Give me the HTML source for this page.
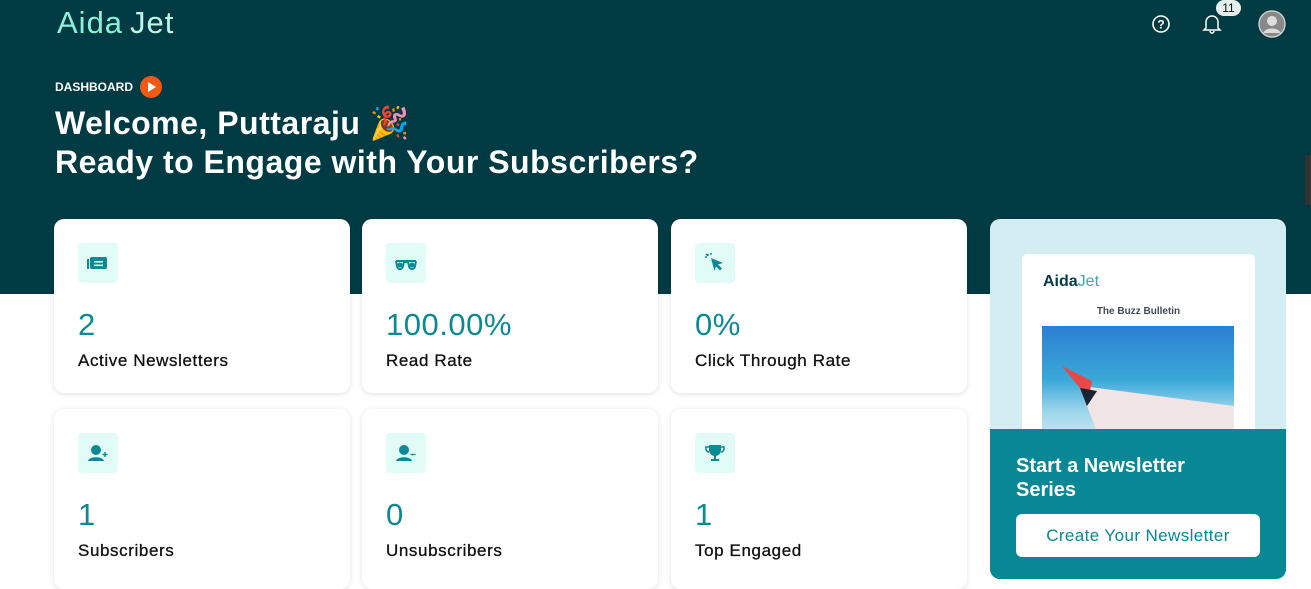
<!DOCTYPE html>
<html><head><meta charset="utf-8"><style>
*{margin:0;padding:0;box-sizing:border-box}
body{width:1311px;height:569px;overflow:hidden;background:#fff;font-family:"Liberation Sans",sans-serif;position:relative}
.hdr{position:absolute;left:0;top:0;width:1311px;height:294px;background:#003b44}
.logo{position:absolute;left:57px;top:5px;font-size:31px;color:#8ef0d6;letter-spacing:1px}
.logo span{font-weight:normal;color:#bdf5e6;margin-left:7px}
.dash{position:absolute;left:55px;top:80px;color:#fff;font-size:12px;font-weight:bold}
.play{position:absolute;left:140px;top:76px;width:22px;height:22px;border-radius:50%;background:#f05a14}
.play:after{content:"";position:absolute;left:8px;top:6px;border-left:8px solid #fff;border-top:5px solid transparent;border-bottom:5px solid transparent}
h1{position:absolute;left:55px;top:104px;color:#fff;font-size:32px;line-height:39px;font-weight:bold;letter-spacing:0.5px}
.card{position:absolute;background:#fff;border-radius:10px;box-shadow:0 1px 6px rgba(0,0,0,.12);width:296px}
.ib{position:absolute;left:24px;top:24px;width:40px;height:40px;border-radius:4px;background:#e1fcf6}
.ib svg{position:absolute;left:8px;top:8px}
.num{position:absolute;left:24px;top:88px;font-size:31px;color:#0b8a96;letter-spacing:0.5px}
.lbl{position:absolute;left:24px;top:132px;font-size:17px;color:#111;letter-spacing:0.6px;-webkit-text-stroke:0.3px #111}
.side{position:absolute;left:990px;top:219px;width:296px;height:360px;border-radius:10px;background:#d3eef3;overflow:hidden}
.paper{position:absolute;left:32px;top:35px;width:233px;height:200px;background:#fff;border-radius:5px}
.sky{position:absolute;left:20px;top:72px;width:192px;height:120px;background:linear-gradient(#2c7fd2,#3aa8d8 45%,#9ad4ea 70%,#d8eef6)}
.teal{position:absolute;left:0;top:210px;width:296px;height:150px;background:#078894}
.btn{position:absolute;left:26px;top:85px;width:244px;height:43px;background:#fff;border-radius:6px;color:#078894;font-size:17px;text-align:center;line-height:43px;letter-spacing:0.4px}
</style></head><body>
<div class="hdr"></div>
<div class="logo">Aida<span>Jet</span></div>
<svg style="position:absolute;left:1151px;top:14px" width="20" height="20" viewBox="0 0 20 20"><circle cx="10" cy="10" r="8" fill="none" stroke="#fff" stroke-width="1.6"/><text x="10" y="14.5" font-size="12" font-weight="bold" fill="#fff" text-anchor="middle" font-family="Liberation Sans">?</text></svg>
<svg style="position:absolute;left:1202px;top:12px" width="20" height="22" viewBox="0 0 20 22"><path d="M4 16V10a6 6 0 0 1 12 0v6l2 2H2z M8 19a2 2 0 0 0 4 0" fill="none" stroke="#fff" stroke-width="1.5"/></svg>
<div style="position:absolute;left:1216px;top:0;width:25px;height:16px;border-radius:8px;background:#e6eeee;color:#111;font-size:12px;text-align:center;line-height:16px">11</div>
<svg style="position:absolute;left:1258px;top:10px" width="28" height="28" viewBox="0 0 28 28"><circle cx="14" cy="14" r="13" fill="#888" stroke="#ccc" stroke-width="1.5"/><circle cx="14" cy="11" r="5" fill="#ddd"/><path d="M5 23a10 8 0 0 1 18 0z" fill="#ddd"/></svg>
<div style="position:absolute;left:1305px;top:155px;width:6px;height:50px;background:#333"></div>
<div class="dash">DASHBOARD</div><div class="play"></div>
<h1>Welcome, Puttaraju 🎉<br>Ready to Engage with Your Subscribers?</h1>

<div class="card" style="left:54px;top:219px;height:174px"><div class="ib"><svg width="24" height="24" viewBox="0 0 24 24"><rect x="4" y="6" width="17" height="12" rx="2" fill="#0b8a96"/><rect x="1" y="8" width="2" height="10" fill="#0b8a96"/><rect x="8" y="10" width="9" height="1.6" fill="#e1fcf6"/><rect x="8" y="13.5" width="9" height="1.6" fill="#e1fcf6"/></svg></div><div class="num">2</div><div class="lbl">Active Newsletters</div></div>
<div class="card" style="left:362px;top:219px;height:174px"><div class="ib"><svg width="24" height="24" viewBox="0 0 24 24"><path d="M2 10h20M2 10l1 5a3 3 0 0 0 6 0l1-4h4l1 4a3 3 0 0 0 6 0l1-5" fill="none" stroke="#0b8a96" stroke-width="2"/><circle cx="6" cy="14" r="2.5" fill="#0b8a96"/><circle cx="18" cy="14" r="2.5" fill="#0b8a96"/></svg></div><div class="num">100.00%</div><div class="lbl">Read Rate</div></div>
<div class="card" style="left:671px;top:219px;height:174px"><div class="ib"><svg width="24" height="24" viewBox="0 0 24 24"><path d="M8 7l12 5-5 1.5 4 4-2 2-4-4L11.5 20z" fill="#0b8a96"/><path d="M5 3v2M2 6h2M3 3l1.5 1.5M8 2v2" stroke="#0b8a96" stroke-width="1.4"/></svg></div><div class="num">0%</div><div class="lbl">Click Through Rate</div></div>

<div class="card" style="left:54px;top:409px;height:180px"><div class="ib"><svg width="24" height="24" viewBox="0 0 24 24"><circle cx="10" cy="9" r="5" fill="#0b8a96"/><path d="M2 20c1-5 15-5 16 0z" fill="#0b8a96"/><path d="M19 11v5M16.5 13.5h5" stroke="#0b8a96" stroke-width="1.4"/></svg></div><div class="num">1</div><div class="lbl">Subscribers</div></div>
<div class="card" style="left:362px;top:409px;height:180px"><div class="ib"><svg width="24" height="24" viewBox="0 0 24 24"><circle cx="10" cy="9" r="5" fill="#0b8a96"/><path d="M2 20c1-5 15-5 16 0z" fill="#0b8a96"/><path d="M16.5 13.5h5" stroke="#0b8a96" stroke-width="1.4"/></svg></div><div class="num">0</div><div class="lbl">Unsubscribers</div></div>
<div class="card" style="left:671px;top:409px;height:180px"><div class="ib"><svg width="24" height="24" viewBox="0 0 24 24"><path d="M6 4h12v5a6 6 0 0 1-12 0z" fill="#0b8a96"/><path d="M6 6H3v2a3 3 0 0 0 3 3M18 6h3v2a3 3 0 0 1-3 3" fill="none" stroke="#0b8a96" stroke-width="1.6"/><rect x="11" y="14" width="2" height="4" fill="#0b8a96"/><rect x="8" y="18" width="8" height="2" fill="#0b8a96"/></svg></div><div class="num">1</div><div class="lbl">Top Engaged</div></div>

<div class="side"><div class="paper">
<div style="position:absolute;left:21px;top:19px;font-size:16px;color:#073a44"><b>Aida</b><span style="color:#3aa7b5">Jet</span></div>
<div style="position:absolute;left:0;width:233px;top:52px;text-align:center;font-size:10px;font-weight:bold;color:#444a5a">The Buzz Bulletin</div>
<div class="sky"><svg width="192" height="120" viewBox="0 0 192 120"><path d="M40 60L192 80V120H60L45 80z" fill="#f1e4e4"/><path d="M20 40L50 55L45 80L38 62z" fill="#e84848"/><path d="M38 62L45 80L55 65z" fill="#1a2430"/></svg></div>
</div>
<div class="teal"><div style="position:absolute;left:26px;top:25px;color:#fff;font-size:20px;font-weight:bold;line-height:24px">Start a Newsletter<br>Series</div><div class="btn">Create Your Newsletter</div></div>
</div>
</body></html>
